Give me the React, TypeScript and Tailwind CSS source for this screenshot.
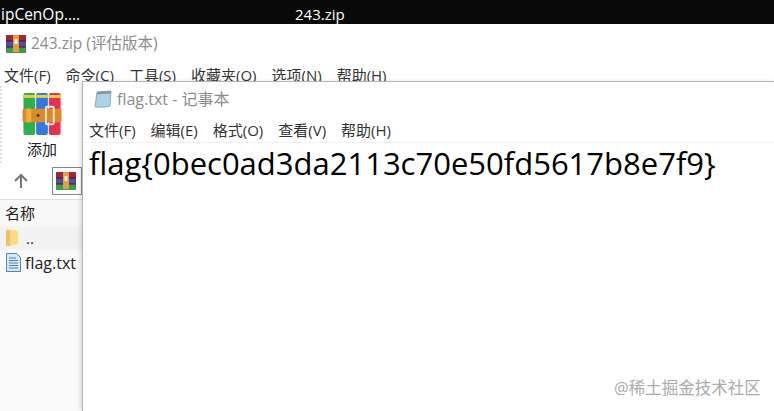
import React from 'react';

const sans = 'font-["Open_Sans","Noto_Sans_CJK_SC",sans-serif]';

function RarIcon() {
  return (
    <svg width={40} height={43} viewBox="0 0 40 44">
      <rect x="1" y="0" width="12" height="43" rx="2" fill="#2fae4a" />
      <rect x="14" y="0" width="12" height="43" rx="2" fill="#3477e0" />
      <rect x="27" y="0" width="12" height="43" rx="2" fill="#e5304f" />
      <rect x="1" y="2" width="12" height="3" fill="#e8d23a" />
      <rect x="14" y="2" width="12" height="3" fill="#e8d23a" />
      <rect x="27" y="2" width="12" height="3" fill="#e8d23a" />
      <rect x="0" y="16" width="40" height="14" rx="2" fill="#d98a2b" />
      <rect x="4" y="16" width="5" height="14" fill="#f0b040" />
      <rect x="24" y="14" width="8" height="18" rx="1" fill="none" stroke="#efe6d0" strokeWidth="2" />
      <circle cx="16" cy="23" r="1.5" fill="#5c3510" />
    </svg>
  );
}

// 작은 아이콘은 가로 띠 모양
function RarSmallIcon() {
  return (
    <svg width={20} height={20} viewBox="0 0 20 20">
      <rect x="0" y="1" width="20" height="6" fill="#a3243f" />
      <rect x="0" y="7" width="20" height="6" fill="#5a4aa8" />
      <rect x="0" y="13" width="20" height="6" fill="#3f9a4a" />
      <rect x="0" y="6.5" width="20" height="1" fill="#30202a" />
      <rect x="0" y="12.5" width="20" height="1" fill="#30202a" />
      <rect x="7" y="1" width="6" height="17" rx="1" fill="#e0a040" />
      <rect x="8.5" y="5" width="3" height="5" fill="#fff1d0" />
    </svg>
  );
}

function NoteIcon() {
  return (
    <svg width="20" height="20" viewBox="0 0 20 20">
      <path d="M4 3 L18 2 L17 17 Q10 19 2 18 Z" fill="#a9d6e6" stroke="#7f9aa8" strokeWidth="0.8" />
      <path d="M4 3 L18 2 L18 4.5 L4 5.5 Z" fill="#8a959c" />
    </svg>
  );
}

function TextFileIcon() {
  return (
    <svg width="15" height="19" viewBox="0 0 15 19">
      <path d="M0.5 0.5 H10.5 L14.5 4.5 V18.5 H0.5 Z" fill="#d7e8f5" stroke="#4f86b5" />
      <path d="M3 5 H10 M3 7.5 H12 M3 10 H12 M3 12.5 H12 M3 15 H12" stroke="#4f86b5" strokeWidth="1" />
    </svg>
  );
}

function FolderIcon() {
  return (
    <svg width="13" height="18" viewBox="0 0 13 18">
      <path d="M0 2 Q0 1 1 1 H5 V17 H1 Q0 17 0 16 Z" fill="#eec35a" />
      <path d="M4 0.5 L12 2 V15 L4 17 Z" fill="#fbdc86" />
    </svg>
  );
}

const rarMenu = ['文件(F)', '命令(C)', '工具(S)', '收藏夹(O)', '选项(N)', '帮助(H)'];
const noteMenu = ['文件(F)', '编辑(E)', '格式(O)', '查看(V)', '帮助(H)'];

export default function App() {
  return (
    <div className={`relative w-[774px] h-[411px] overflow-hidden bg-white ${sans}`}>
      {/* 상단 검은 바 */}
      <div className="relative h-[24px] bg-[#0a0a0a] text-white text-[15.5px] leading-[28px]">
        <span className="absolute left-0 top-0 ml-[1px]">ipCenOp....</span>
        <span className="absolute left-[295px] top-0 text-[15px]">243.zip</span>
      </div>

      {/* WinRAR 창 */}
      <div className="flex items-center gap-[5px] h-[40px] pl-[6px] text-[15.5px] text-[#8c8c8c]">
        <RarSmallIcon />
        <span>243.zip (评估版本)</span>
      </div>
      <div className="flex gap-[15px] h-[22px] pl-[4px] text-[15px] leading-[22px] text-[#333]">
        {rarMenu.map((m) => (
          <span key={m}>{m}</span>
        ))}
      </div>
      <div className="h-[77px] flex flex-col items-center w-[82px] pt-[7px] border-l-[2px] border-dotted border-[#ddd]">
        <RarIcon />
        <span className="text-[15px] leading-[18px] mt-[4px] text-[#222]">添加</span>
      </div>
      <div className="flex items-center h-[36px] w-[82px] bg-white">
        <svg className="ml-[13px]" width="16" height="16" viewBox="0 0 16 16" fill="none" stroke="#777" strokeWidth="2">
          <path d="M8 15 V2 M2 8 L8 2 L14 8" />
        </svg>
        <div className="ml-[23px] w-[30px] h-[28px] border border-[#888] flex items-center pl-[3px]">
          <RarSmallIcon />
        </div>
      </div>
      <div className="h-[27px] w-[82px] pl-[5px] text-[15px] leading-[26px] text-[#222] bg-[#f8f8f8] border-t border-[#ddd]">名称</div>
      <div className="w-[82px] h-[187px] bg-[#fafafa]">
        <div className="flex items-center h-[24px] pl-[6px] bg-[#f2f2f2] text-[15px] text-[#222]">
          <FolderIcon />
          <span className="ml-[7px]">..</span>
        </div>
        <div className="flex items-center h-[25px] pl-[6px] text-[16px] text-[#222]">
          <TextFileIcon />
          <span className="ml-[4px]">flag.txt</span>
        </div>
      </div>

      {/* 메모장 창 */}
      <div className="absolute left-[82px] top-[81px] w-[692px] h-[330px] bg-white border-l border-t border-[#b4b4b4] shadow-[-2px_0_4px_rgba(0,0,0,0.12)]">
        <div className="flex items-center gap-[4px] h-[34px] pl-[10px] text-[16px] text-[#8c8c8c]">
          <NoteIcon />
          <span>flag.txt - 记事本</span>
        </div>
        <div className="flex gap-[15px] h-[27px] pt-[2px] pl-[6px] text-[15px] leading-[24px] text-[#333] border-b border-[#f0f0f0]">
          {noteMenu.map((m) => (
            <span key={m}>{m}</span>
          ))}
        </div>
        <div className="pl-[6px] text-[31px] leading-[40px] text-black whitespace-nowrap">
          flag{'{'}0bec0ad3da2113c70e50fd5617b8e7f9{'}'}
        </div>
      </div>

      {/* 워터마크 */}
      <span className="absolute left-[614px] top-[378px] text-[16.5px] leading-[20px] text-[#ababab]">@稀土掘金技术社区</span>
    </div>
  );
}
